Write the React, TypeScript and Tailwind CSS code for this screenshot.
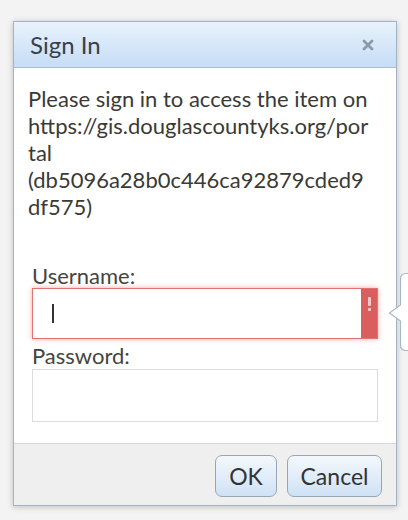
import React from 'react';

const ErrorTip: React.FC = () => (
  <svg className="absolute left-[386px] top-[270px]" width="30" height="84" viewBox="0 0 30 84">
    <path
      d="M30 3.5 H20 Q14.5 3.5 14.5 9 V35 L3.5 43 L14.5 51 V75 Q14.5 80.5 20 80.5 H30"
      fill="#ffffff"
      stroke="#a9b7c6"
      strokeWidth="1.2"
    />
  </svg>
);

const App: React.FC = () => {
  return (
    <div className="relative w-[408px] h-[520px] bg-[#f3f3f3] pl-[13px] pt-[21px] overflow-hidden font-['Lato','Liberation_Sans',sans-serif] text-[#333]">
      <div className="w-[384px] h-[485px] flex flex-col border border-[#a3b3c4] bg-white shadow-[0_1px_6px_rgba(0,0,0,0.22)]">
        {/* Title bar */}
        <div className="h-[46px] flex items-center justify-between pl-[16px] pr-[22px] border-b border-[#a9bed4] bg-gradient-to-b from-[#e9f2fc] to-[#c5ddf6]">
          <span className="text-[24px] text-[#3a3f48]">Sign In</span>
          <svg width="12" height="12" viewBox="0 0 12 12">
            <path d="M2 2 L10 10 M10 2 L2 10" stroke="#8d9aa6" strokeWidth="2.8" strokeLinecap="round" />
          </svg>
        </div>

        {/* Body */}
        <div className="flex-1 pt-[17px] px-[14px]">
          <div className="text-[22px] leading-[27px] text-[#3a3a36]">
            <div>Please sign in to access the item on</div>
            <div>https://gis.douglascountyks.org/por</div>
            <div>tal</div>
            <div>(db5096a28b0c446ca92879cded9</div>
            <div>df575)</div>
          </div>

          <div className="mt-[45px] px-[4px]">
            <div className="text-[22px] leading-[22px] text-[#45453d]">Username:</div>
            <div className="mt-[1px] h-[51px] flex border border-[#e07272] shadow-[0_0_5px_rgba(232,90,90,0.55)] bg-white">
              <div className="flex-1 flex items-center pl-[19px]">
                <span className="w-[1.5px] h-[19px] bg-[#333]" />
              </div>
              <div className="w-[16px] bg-[#d95f5f] flex flex-col items-center pt-[8px]">
                <span className="w-[3px] h-[9px] bg-[#f5c9c9] rounded-[1px]" />
                <span className="mt-[2px] w-[3px] h-[3px] bg-[#f5c9c9] rounded-[1px]" />
              </div>
            </div>

            <div className="mt-[6px] text-[22px] leading-[22px] text-[#45453d]">Password:</div>
            <div className="mt-[2px] h-[53px] border border-[#dcdcdc] bg-white" />
          </div>
        </div>

        {/* Footer */}
        <div className="h-[62px] border-t border-[#d6d9dc] bg-[#efefef] flex justify-end items-start gap-[10px] pt-[11px] pr-[14px]">
          <button className="w-[62px] h-[42px] rounded-[7px] border border-[#97a6b6] bg-gradient-to-b from-[#f4f8fc] to-[#cfe2f6] text-[23px] text-[#333]">
            OK
          </button>
          <button className="w-[95px] h-[42px] rounded-[7px] border border-[#97a6b6] bg-gradient-to-b from-[#f4f8fc] to-[#cfe2f6] text-[23px] text-[#333]">
            Cancel
          </button>
        </div>
      </div>

      <ErrorTip />
    </div>
  );
};

export default App;
